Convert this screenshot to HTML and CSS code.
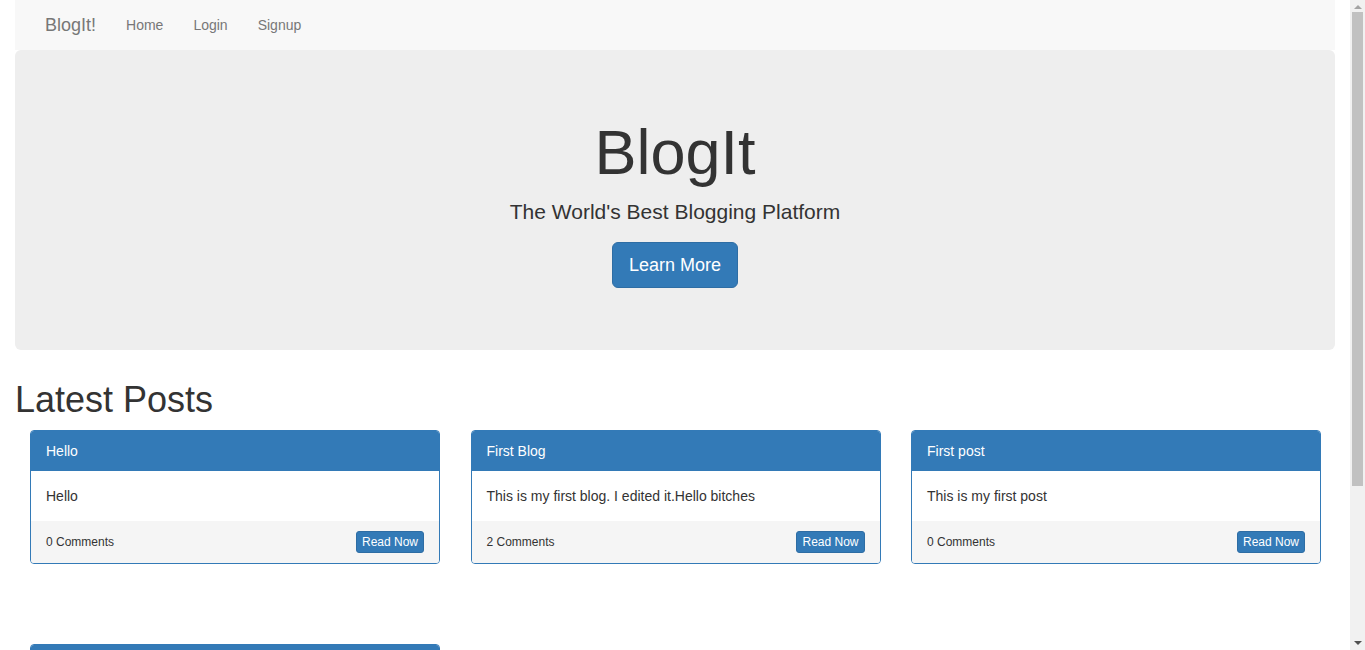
FILE: index.html
```html
<!DOCTYPE html>
<html lang="en">
<head>
<meta charset="utf-8">
<title>BlogIt</title>
<link rel="stylesheet" href="styles.css">
</head>
<body>
<div class="container">
  <nav class="navbar">
    <a class="brand" href="#">BlogIt!</a>
    <a class="nav-link" href="#">Home</a>
    <a class="nav-link" href="#">Login</a>
    <a class="nav-link" href="#">Signup</a>
  </nav>
  <header class="jumbotron">
    <h1 class="jumbo-title">BlogIt</h1>
    <p class="jumbo-sub">The World's Best Blogging Platform</p>
    <p class="jumbo-action"><a class="btn btn-lg" href="#">Learn More</a></p>
  </header>
  <h1 class="section-title">Latest Posts</h1>
  <div class="posts">
    <div class="panel">
      <div class="panel-heading">Hello</div>
      <div class="panel-body">Hello</div>
      <div class="panel-footer"><span>0 Comments</span><a class="btn btn-xs" href="#">Read Now</a></div>
    </div>
    <div class="panel">
      <div class="panel-heading">First Blog</div>
      <div class="panel-body">This is my first blog. I edited it.Hello bitches</div>
      <div class="panel-footer"><span>2 Comments</span><a class="btn btn-xs" href="#">Read Now</a></div>
    </div>
    <div class="panel">
      <div class="panel-heading">First post</div>
      <div class="panel-body">This is my first post</div>
      <div class="panel-footer"><span>0 Comments</span><a class="btn btn-xs" href="#">Read Now</a></div>
    </div>
    <div class="panel">
      <div class="panel-heading">Another post</div>
      <div class="panel-body">This is another post</div>
      <div class="panel-footer"><span>0 Comments</span><a class="btn btn-xs" href="#">Read Now</a></div>
    </div>
  </div>
</div>
<div class="fake-scrollbar" aria-hidden="true">
  <span class="sb-arrow sb-up"></span>
  <span class="sb-thumb"></span>
  <span class="sb-arrow sb-down"></span>
</div>
</body>
</html>
```
FILE: styles.css
```css
* { box-sizing: border-box; }
html, body { margin: 0; padding: 0; }
body {
  font-family: "Liberation Sans", Arial, Helvetica, sans-serif;
  font-size: 14px;
  line-height: 1.42857143;
  color: #333;
  background: #fff;
  padding-right: 15px;
}
a { text-decoration: none; }
.container { padding: 0 15px 40px; }

.navbar {
  display: flex;
  align-items: center;
  height: 50px;
  background: #f8f8f8;
  padding: 0 15px;
}
.brand {
  font-size: 18px;
  line-height: 20px;
  padding: 15px;
  color: #777;
}
.nav-link {
  padding: 15px;
  line-height: 20px;
  color: #777;
}

.jumbotron {
  background: #eee;
  border-radius: 6px;
  padding: 48px 60px;
  text-align: center;
  margin-bottom: 30px;
}
.jumbo-title {
  font-size: 63px;
  font-weight: 500;
  line-height: 1.1;
  margin: 20px 0 10px;
}
.jumbo-sub {
  font-size: 21px;
  font-weight: 200;
  margin: 0 0 15px;
}
.jumbo-action { margin: 0 0 14px; }

.btn {
  display: inline-block;
  background: #337ab7;
  border: 1px solid #2e6da4;
  color: #fff;
}
.btn-lg {
  font-size: 18px;
  line-height: 1.3333333;
  padding: 10px 16px;
  border-radius: 6px;
}
.btn-xs {
  font-size: 12px;
  line-height: 1.5;
  padding: 1px 5px;
  border-radius: 3px;
}

.section-title {
  font-size: 36px;
  font-weight: 500;
  line-height: 1.1;
  margin: 0 0 10px;
}

.posts {
  display: grid;
  grid-template-columns: repeat(3, 1fr);
  column-gap: 30.5px;
  row-gap: 80px;
  padding: 0 14px 0 15px;
}
.panel {
  border: 1px solid #337ab7;
  border-radius: 4px;
  background: #fff;
  overflow: hidden;
}
.panel-heading {
  background: #337ab7;
  color: #fff;
  padding: 10px 15px;
  line-height: 20px;
}
.panel-body {
  padding: 15px;
  line-height: 20px;
}
.panel-footer {
  background: #f5f5f5;
  padding: 10px 15px;
  display: flex;
  justify-content: space-between;
  align-items: baseline;
  font-size: 12px;
}

.fake-scrollbar {
  position: fixed;
  top: 0;
  right: 0;
  width: 15px;
  height: 100vh;
  background: #f1f1f1;
  display: flex;
  flex-direction: column;
  align-items: center;
}
.sb-arrow {
  width: 0;
  height: 0;
  border-left: 4px solid transparent;
  border-right: 4px solid transparent;
}
.sb-up {
  border-bottom: 4px solid #a3a3a3;
  margin: 5px 0 3px;
}
.sb-thumb {
  width: 11px;
  height: 474px;
  background: #c1c1c1;
}
.sb-down {
  border-top: 4px solid #505050;
  margin-top: auto;
  margin-bottom: 5px;
}
```
